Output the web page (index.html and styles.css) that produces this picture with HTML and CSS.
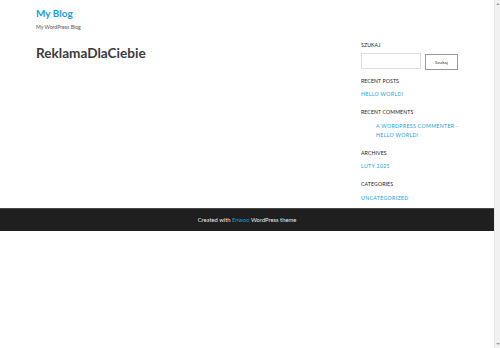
FILE: index.html
```html
<!DOCTYPE html>
<html lang="pl">
<head>
<meta charset="utf-8">
<title>My Blog</title>
<link rel="stylesheet" href="styles.css">
</head>
<body>
<div class="page">
  <header class="site-header">
    <a class="site-title" href="#">My Blog</a>
    <p class="site-desc">My WordPress Blog</p>
  </header>
  <div class="main">
    <main class="content">
      <h1 class="page-title">ReklamaDlaCiebie</h1>
    </main>
    <aside class="sidebar">
      <section class="widget widget-search">
        <h2 class="widget-title">Szukaj</h2>
        <form class="search">
          <input class="search-input" type="text">
          <button class="search-btn" type="button">Szukaj</button>
        </form>
      </section>
      <section class="widget">
        <h2 class="widget-title">Recent Posts</h2>
        <a class="link" href="#">Hello world!</a>
      </section>
      <section class="widget">
        <h2 class="widget-title">Recent Comments</h2>
        <div class="comment"><a class="clink" href="#">A WordPress Commenter</a> - <a class="clink" href="#">Hello world!</a></div>
      </section>
      <section class="widget">
        <h2 class="widget-title">Archives</h2>
        <a class="link" href="#">luty 2025</a>
      </section>
      <section class="widget last">
        <h2 class="widget-title">Categories</h2>
        <a class="link" href="#">Uncategorized</a>
      </section>
    </aside>
  </div>
  <footer class="site-footer">Created with <a class="footer-link" href="#">Enwoo</a> WordPress theme</footer>
</div>
<div class="scrollbar">
  <span class="arrow up"></span>
  <span class="arrow down"></span>
</div>
</body>
</html>
```
FILE: styles.css
```css
html, body {
  margin: 0;
  padding: 0;
  height: 100%;
}
body {
  display: flex;
  font-family: Lato, "Open Sans", sans-serif;
  color: #404040;
  background: #fff;
  overflow: hidden;
}
.page {
  flex: 1;
  min-width: 0;
}
.scrollbar {
  width: 6px;
  background: #f1f1f1;
  border-left: 1px solid #e6e6e6;
  display: flex;
  flex-direction: column;
  justify-content: space-between;
  align-items: center;
  padding: 3px 0;
  box-sizing: border-box;
}
.arrow {
  width: 0;
  height: 0;
  border-left: 2px solid transparent;
  border-right: 2px solid transparent;
}
.arrow.up { border-bottom: 2px solid #a3a3a3; }
.arrow.down { border-top: 2px solid #a3a3a3; }

a { text-decoration: none; }

.site-header {
  padding: 7px 0 0 36px;
}
.site-title {
  display: block;
  font-size: 10px;
  font-weight: 700;
  color: #1a9bd7;
  line-height: 13px;
}
.site-desc {
  margin: 4px 0 0;
  font-size: 5.2px;
  line-height: 7px;
  color: #555;
}

.main {
  display: flex;
  padding: 0 0 0 36px;
  min-height: 177px;
}
.content {
  width: 325px;
}
.page-title {
  margin: 14px 0 0;
  font-size: 13.6px;
  line-height: 17px;
  font-weight: 700;
  color: #3a3a3a;
}
.sidebar {
  width: 110px;
  padding-top: 10.5px;
  font-size: 5.2px;
}
.widget {
  margin-bottom: 10px;
}
.widget.widget-search {
  margin-bottom: 7.5px;
}
.widget.widget-search .widget-title {
  margin-bottom: 4.5px;
}
.widget.last {
  margin-bottom: 0;
}
.widget-title {
  margin: 0 0 5.5px;
  font-size: 5.2px;
  line-height: 7px;
  font-weight: 400;
  letter-spacing: 0.1px;
  text-transform: uppercase;
  color: #1a1a1a;
}
.search {
  display: flex;
  gap: 4px;
  align-items: flex-start;
}
.search-input {
  width: 60px;
  height: 16px;
  box-sizing: border-box;
  border: 1px solid #ddd;
  margin: 0;
  padding: 0;
  background: #fff;
}
.search-btn {
  margin: 1px 0 0;
  width: 33px;
  height: 16px;
  box-sizing: border-box;
  border: 1px solid #999;
  background: #fff;
  font-family: Lato, sans-serif;
  font-size: 4.6px;
  color: #333;
  padding: 0;
}
.link {
  display: block;
  font-size: 5.2px;
  line-height: 9px;
  letter-spacing: 0.35px;
  text-transform: uppercase;
  color: #1a9bd7;
}
.comment {
  padding-left: 15px;
  font-size: 5.2px;
  line-height: 9px;
  letter-spacing: 0.35px;
  color: #1a9bd7;
  width: 84px;
}
.clink {
  color: #1a9bd7;
  text-transform: uppercase;
}
.site-footer {
  height: 23px;
  background: #1f1f1f;
  border-top: 1px solid #4a4a4a;
  box-sizing: border-box;
  text-align: center;
  font-size: 5.8px;
  line-height: 21px;
  color: #e8e8e8;
}
.footer-link {
  color: #1a9bd7;
}
```
